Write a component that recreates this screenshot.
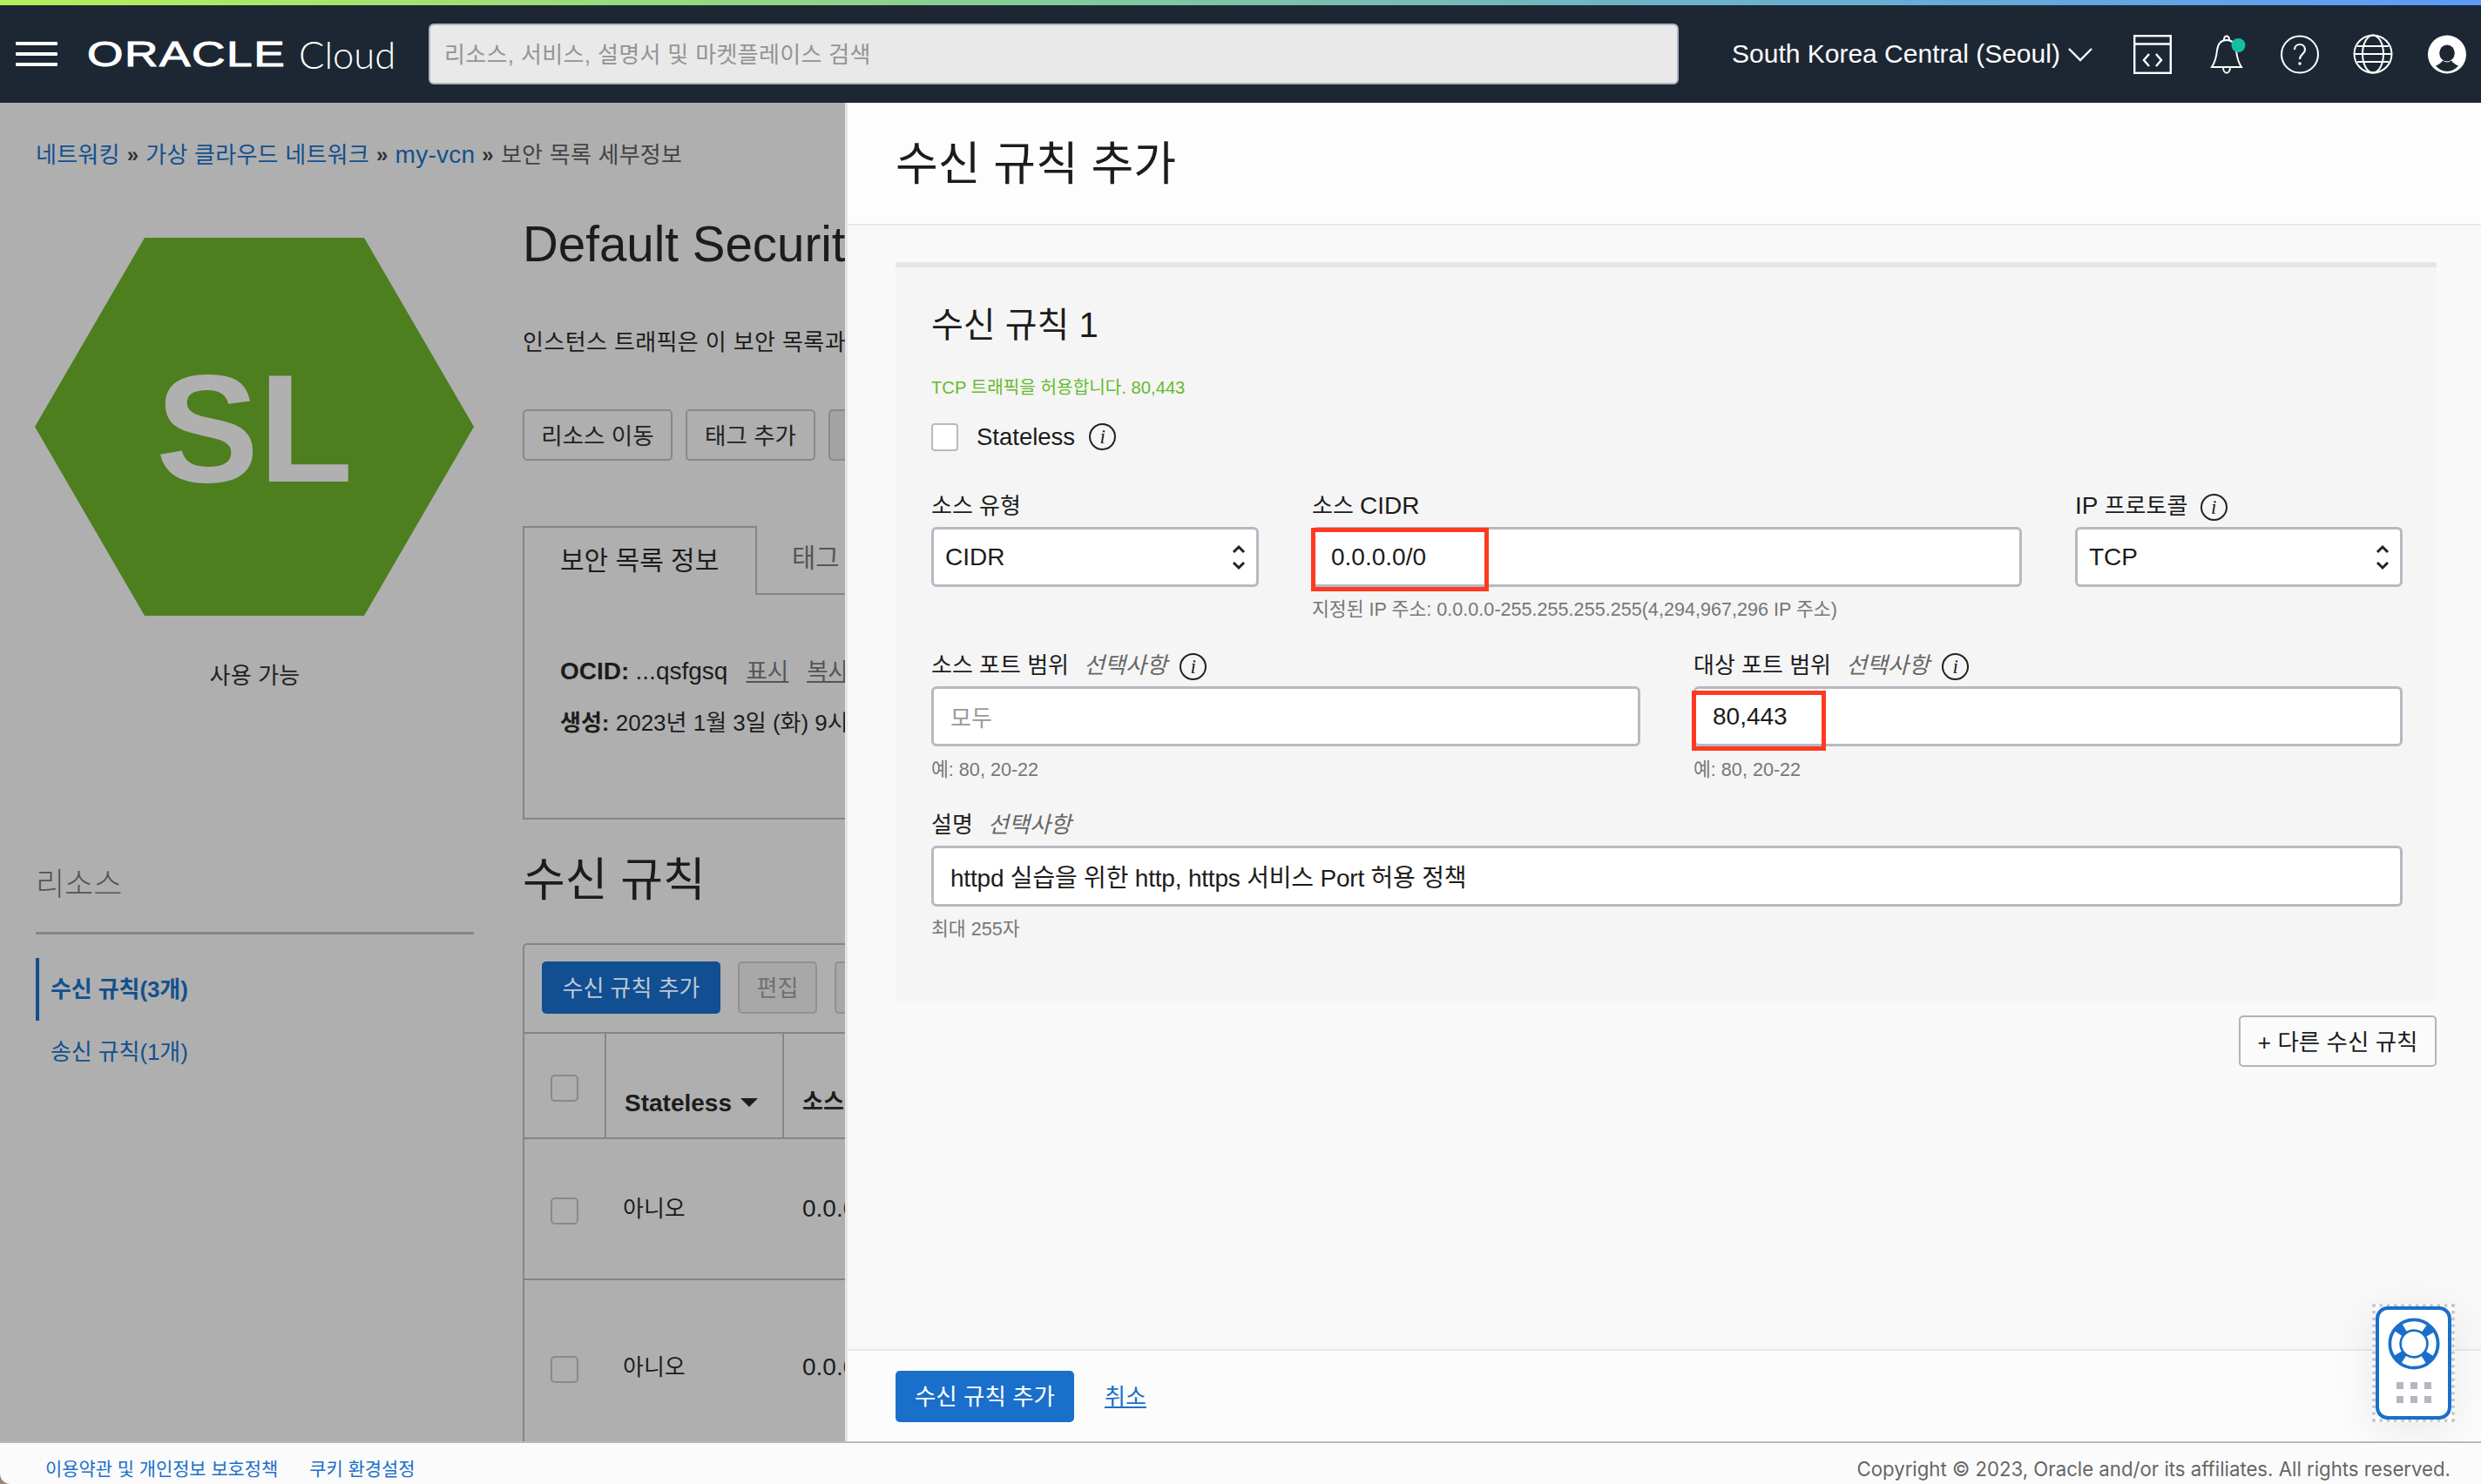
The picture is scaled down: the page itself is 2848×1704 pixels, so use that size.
<div class="app">
  <div class="rainbow"></div>
  <header class="nav">
    <div class="burger"><i></i><i></i><i></i></div>
    <div class="logo"><span class="oracle">ORACLE</span><span class="cloud">Cloud</span></div>
    <div class="search">리소스, 서비스, 설명서 및 마켓플레이스 검색</div>
    <div class="region">South Korea Central (Seoul)</div>
    <svg class="chev" width="30" height="17" viewBox="0 0 30 17"><path d="M2 2l13 13L28 2" fill="none" stroke="#fff" stroke-width="2.4"/></svg>
    <svg class="ic code" width="44" height="45" viewBox="0 0 44 45" fill="none" stroke="#fff" stroke-width="2.4"><rect x="1.2" y="1.2" width="41.6" height="42.6"/><path d="M1 10.5h42"/><path d="M18 22l-6 7 6 7M26 22l6 7-6 7"/></svg>
    <svg class="ic bell" width="44" height="48" viewBox="0 0 44 48" fill="none" stroke="#fff" stroke-width="2"><path d="M3 39c4-6 5-10 6-19 1-8 5-12 11-12s10 4 11 12c1 9 2 13 6 19z"/><path d="M17 8c0-6 6-6 6 0M16 39c0 9 8 9 8 0"/><ellipse cx="33.500" cy="14" rx="8" ry="8" fill="#13c0a3" stroke="none"/></svg>
    <svg class="ic help" width="44" height="45" viewBox="0 0 44 45" fill="none" stroke="#fff" stroke-width="2"><circle cx="22" cy="22.500" r="21"/><path d="M16 17c0-8 12-8 12 0 0 5-6 5-6 11" stroke-width="2.200"/><circle cx="22" cy="33" r="1.800" fill="#fff" stroke="none"/></svg>
    <svg class="ic globe" width="46" height="46" viewBox="0 0 46 46" fill="none" stroke="#fff" stroke-width="2"><circle cx="23" cy="23" r="21.500"/><ellipse cx="23" cy="23" rx="12" ry="21.500"/><path d="M1.500 23h43M5 14h36M5 32h36"/></svg>
    <svg class="ic user" width="44" height="45" viewBox="0 0 44 45"><circle cx="22" cy="22.500" r="22" fill="#fff"/><ellipse cx="22" cy="21" rx="8.800" ry="9.500" fill="#1d2733"/><path d="M9 35.500Q15 33 17 29.500Q22 33.500 27 29.500Q29 33 35 35.500Q30 41.500 22 42Q14 41.500 9 35.500z" fill="#1d2733"/></svg>
  </header>

  <main class="main">
    <nav class="crumbs">
      <a>네트워킹</a><b>»</b><a>가상 클라우드 네트워크</a><b>»</b><a class="la">my-vcn</a><b>»</b><span>보안 목록 세부정보</span>
    </nav>
    <div class="cols">
      <aside class="side">
        <div class="hex"><span>SL</span></div>
        <div class="status">사용 가능</div>
        <div class="res">리소스</div>
        <div class="sidelinks">
          <a class="on">수신 규칙(3개)</a>
          <a>송신 규칙(1개)</a>
        </div>
      </aside>
      <section class="content">
        <h1>Default Security</h1>
        <p class="lead">인스턴스 트래픽은 이 보안 목록과</p>
        <div class="btns"><button class="b1">리소스 이동</button><button class="b2">태그 추가</button><button class="third">삭제</button></div>
        <div class="tabbox">
          <div class="tabs"><div class="tab on">보안 목록 정보</div><div class="tab">태그</div></div>
          <div class="info">
            <div class="l1"><b class="la">OCID:</b> <span class="la">...qsfgsq</span><u>표시</u><u>복사</u></div>
            <div class="l2"><b>생성:</b> 2023년 1월 3일 (화) 9시</div>
          </div>
        </div>
        <h2>수신 규칙</h2>
        <div class="tablebox">
          <div class="tools"><button class="pri">수신 규칙 추가</button><button class="dis">편집</button><button class="dis">제거</button></div>
          <div class="row head">
            <div class="c0"><div class="cb"></div></div>
            <div class="c1"><b class="la">Stateless</b><i class="caret"></i></div>
            <div class="c2"><b>소스</b></div>
          </div>
          <div class="row r-a">
            <div class="c0"><div class="cb"></div></div>
            <div class="c1">아니오</div>
            <div class="c2 la">0.0.0.0/0</div>
          </div>
          <div class="row r-b">
            <div class="c0"><div class="cb"></div></div>
            <div class="c1">아니오</div>
            <div class="c2 la">0.0.0.0/0</div>
          </div>
        </div>
      </section>
    </div>

    <div class="panel">
      <div class="phead">수신 규칙 추가</div>
      <div class="pbody">
        <div class="rule">
          <div class="rtitle">수신 규칙 1</div>
          <div class="allow">TCP 트래픽을 허용합니다. 80,443</div>
          <div class="stateless"><div class="cb2"></div><span class="la">Stateless</span><span class="inf">i</span></div>

          <div class="r1">
            <div class="f">
              <label>소스 유형</label>
              <div class="box sel"><span class="la">CIDR</span>
                <svg width="18" height="32" viewBox="0 0 18 32" fill="none" stroke="#222" stroke-width="3"><path d="M3 10l6-6 6 6M3 22l6 6 6-6"/></svg>
              </div>
            </div>
            <div class="f">
              <label>소스 <span class="la">CIDR</span></label>
              <div class="box"><span class="la val">0.0.0.0/0</span><div class="mark m1"></div></div>
              <div class="hint">지정된 IP 주소: 0.0.0.0-255.255.255.255(4,294,967,296 IP 주소)</div>
            </div>
            <div class="f">
              <label><span class="la">IP</span> 프로토콜 <span class="inf">i</span></label>
              <div class="box sel"><span class="la">TCP</span>
                <svg width="18" height="32" viewBox="0 0 18 32" fill="none" stroke="#222" stroke-width="3"><path d="M3 10l6-6 6 6M3 22l6 6 6-6"/></svg>
              </div>
            </div>
          </div>

          <div class="r2">
            <div class="f">
              <label>소스 포트 범위 <em>선택사항</em> <span class="inf">i</span></label>
              <div class="box"><span class="ph">모두</span></div>
              <div class="hint h2">예: 80, 20-22</div>
            </div>
            <div class="f">
              <label>대상 포트 범위 <em>선택사항</em> <span class="inf">i</span></label>
              <div class="box"><span class="la val">80,443</span><div class="mark m2"></div></div>
              <div class="hint h2">예: 80, 20-22</div>
            </div>
          </div>

          <div class="f r3">
            <label>설명 <em>선택사항</em></label>
            <div class="box tall"><span class="val">httpd 실습을 위한 http, https 서비스 Port 허용 정책</span></div>
            <div class="hint">최대 255자</div>
          </div>
        </div>
        <div class="more"><button>+ 다른 수신 규칙</button></div>
      </div>
      <div class="pfoot"><button class="pri">수신 규칙 추가</button><a>취소</a></div>
    </div>

    <div class="widget">
      <div class="wcard">
        <svg width="60" height="60" viewBox="0 0 60 60">
          <circle cx="30" cy="30" r="21.750" fill="none" stroke="#1a6fcb" stroke-width="15.500"/>
          <circle cx="30" cy="30" r="21.300" fill="none" stroke="#fff" stroke-width="9" stroke-dasharray="24 9.460" stroke-dashoffset="12"/>
        </svg>
        <div class="dots"><i></i><i></i><i></i><i></i><i></i><i></i></div>
      </div>
    </div>
  </main>

  <footer class="foot">
    <a>이용약관 및 개인정보 보호정책</a><a>쿠키 환경설정</a>
    <span>Copyright © 2023, Oracle and/or its affiliates. All rights reserved.</span>
  </footer>
</div>

<style>
  :global(body) { margin: 0; }
  .app {
    width: 2848px; height: 1704px; display: flex; flex-direction: column; overflow: hidden; background: #9a8672;
    font-family: "Liberation Sans", "Noto Sans CJK KR", sans-serif; font-size: 26px; color: #1c1c1c;
  }
  .la { font-size: 28px; }
  button { font-family: inherit; }
  .rainbow { height: 6px; flex: none; background: linear-gradient(90deg, #b6f05a 0%, #8cd28c 35%, #6fb4c4 65%, #5a9cf8 100%); }
  .nav { height: 112px; flex: none; background: #1d2733; display: flex; align-items: center; color: #fff; }
  .burger { width: 48px; height: 28px; margin-left: 18px; display: flex; flex-direction: column; justify-content: space-between; }
  .burger i { height: 4px; background: #fff; border-radius: 1px; }
  .logo { margin-left: 34px; width: 360px; display: flex; align-items: center; height: 50px; }
  .oracle { display: inline-block; width: 243px; font-size: 40px; letter-spacing: 1.2px; transform: scaleX(1.33); transform-origin: left center; line-height: 50px; -webkit-text-stroke: 1px #fff; }
  .cloud { font-family: Lato, sans-serif; font-weight: 300; font-size: 43.500px; line-height: 50px; }
  .search {
    box-sizing: border-box; width: 1435px; height: 70px; margin-left: 32px; border: 2px solid #aeb4bf; border-radius: 6px; background: #e9e9e9;
    color: #949494; padding-left: 16px; line-height: 68px; letter-spacing: 0.35px;
  }
  .region { margin-left: 61px; width: 384.500px; font-size: 30px; white-space: nowrap; }
  .chev { margin-right: 46px; }
  .ic { flex: none; }
  .bell { margin-right: 38px; }
  .code { margin-right: 43px; }
  .help { margin-right: 39px; }
  .globe { margin-right: 40px; }

  .main { flex: 1; position: relative; overflow: hidden; background: #afafaf; padding: 40px 0 0 41px; min-height: 0; }
  .crumbs { height: 40px; line-height: 40px; display: flex; align-items: center; white-space: nowrap; color: #444; letter-spacing: 0.25px; }
  .crumbs a { color: #12508f; }
  .crumbs b { font-weight: 700; margin: 0 8px; color: #333; font-size: 24px; }
  .cols { display: flex; margin-top: 42px; }
  .side { width: 503px; flex: none; display: flex; flex-direction: column; }
  .hex {
    width: 504px; height: 434px; margin: 33px 0 0 -1px; box-sizing: border-box; padding-top: 4px; background: #4d7f1e;
    clip-path: polygon(0 50%, 25% 0, 75% 0, 100% 50%, 75% 100%, 25% 100%);
    display: flex; align-items: center; justify-content: center; color: #b0b0b0; font-weight: 700; font-size: 177px;
  }
  .status { margin-top: 49px; line-height: 40px; text-align: center; color: #222; letter-spacing: 0.2px; }
  .res { margin-top: 195px; line-height: 50px; font-size: 36px; color: #555; border-bottom: 3px solid #858585; height: 79px; font-weight: 300; }
  .sidelinks { margin-top: 27px; display: flex; flex-direction: column; }
  .sidelinks a { height: 72px; line-height: 72px; padding-left: 17px; color: #12508f; letter-spacing: -0.1px; }
  .sidelinks a.on { border-left: 4px solid #12508f; padding-left: 13px; font-weight: 700; }
  .content { margin-left: 56px; width: 373px; flex: none; white-space: nowrap; overflow: hidden; }
  h1 { margin: 0; font-weight: 400; font-size: 56.500px; line-height: 82px; height: 80px; }
  .lead { margin: 53px 0 0; line-height: 40px; letter-spacing: 0.4px; }
  .btns { margin-top: 57px; display: flex; gap: 15px; }
  .btns button { height: 59px; padding: 0 0 3px; border: 2px solid #858a90; border-radius: 5px; background: #afafaf; color: #222; font-size: 26.500px; flex: none; }
  .b1 { width: 172px; }
  .b2 { width: 149px; }
  .btns button.third { background: #a3a3a3; width: 120px; }
  .tabbox { margin-top: 75px; height: 337px; box-sizing: border-box; border-left: 2px solid #858585; border-bottom: 2px solid #858585; }
  .tabs { display: flex; height: 79px; }
  .tab { line-height: 74px; padding-left: 40px; color: #555; font-size: 29.500px; border-bottom: 2px solid #858585; box-sizing: border-box; flex: 1; }
  .tab.on { flex: none; width: 267px; padding-left: 41px; color: #1c1c1c; font-size: 30px; line-height: 76px; border: 0; border-top: 2px solid #858585; border-right: 2px solid #858585; }
  .info { padding: 68px 0 0 41px; }
  .info .l1 { line-height: 40px; }
  .info .l1 u { color: #555; margin-left: 21px; font-size: 26.500px; }
  .info .l2 { margin-top: 19px; line-height: 40px; }
  h2 { margin: 30px 0 0; font-weight: 400; font-size: 53px; line-height: 80px; height: 79px; }
  .tablebox { margin-top: 33px; border: 2px solid #858585; border-right: 0; border-bottom: 0; border-radius: 5px 0 0 0; }
  .tools { height: 100px; box-sizing: border-box; padding: 19px 0 0 20px; display: flex; gap: 20px; align-items: flex-start; }
  .tools button { height: 60px; border-radius: 5px; font-size: 26px; flex: none; }
  .pri { background: #114f92; color: #bdc8d6; border: 0; }
  .panel .pri { background: #1a6fcb; color: #fff; }
  .tools .pri { width: 205px; padding: 0 0 3px; }
  .tools .dis { background: #a8a8a8; color: #707070; border: 2px solid #919191; width: 91px; padding: 0 0 3px; }
  .row { display: grid; grid-template-columns: 92px 206px 1fr; height: 160px; border-top: 2px solid #858585; box-sizing: content-box; }
  .row.head { height: 119px; }
  .row > div { padding-left: 21px; line-height: 40px; box-sizing: border-box; }
  .r-a > div { padding-top: 60px; }
  .r-b { height: 320px; }
  .r-b > div { padding-top: 80px; }
  .row .c0 { padding: 0 0 0 30px; }
  .r-a .c0 { padding-top: 67px; }
  .r-b .c0 { padding-top: 87px; }
  .row .c2 { padding-left: 21px; }
  .row .c1 { padding-left: 21px; }
  .row.head .c0 { padding-top: 47px; }
  .row.head .c1 { border-left: 2px solid #858585; border-right: 2px solid #858585; padding-top: 60px; }
  .row.head .c2 { padding-top: 58px; }
  .cb { box-sizing: border-box; width: 32px; height: 31px; border: 2px solid #858a90; border-radius: 5px; }
  .caret { display: inline-block; margin-left: 10px; vertical-align: 5px; border: 10px solid transparent; border-top: 10px solid #1c1c1c; border-bottom: 0; }

  .panel { position: absolute; left: 970px; top: 0; right: 0; bottom: 0; background: #f9f9f9; display: flex; flex-direction: column; box-shadow: inset 3px 0 0 #e6e6e6; white-space: nowrap; }
  .phead { height: 141px; flex: none; box-sizing: border-box; margin-left: 3px; padding-left: 55px; font-size: 53px; line-height: 142px; background: #fdfdfd; border-bottom: 2px solid #e8e8e8; }
  .pbody { flex: 1; padding: 42px 51px 0 58px; min-height: 0; }
  .rule { height: 849px; box-sizing: border-box; background: #f5f5f5; border-top: 6px solid #e6e6e6; padding: 41px 39px 0 41px; }
  .rtitle { font-size: 40px; line-height: 50px; }
  .allow { margin-top: 32px; line-height: 30px; font-size: 20.200px; color: #66bb2c; }
  .stateless { margin-top: 26px; height: 32px; display: flex; align-items: center; }
  .stateless .la { margin-left: 21px; margin-right: 16px; font-size: 27.500px; }
  .cb2 { box-sizing: border-box; width: 31px; height: 32px; border: 2px solid #b5bac2; border-radius: 4px; background: #fff; }
  .inf {
    display: inline-flex; box-sizing: border-box; width: 31px; height: 31px; border: 2px solid #222; border-radius: 50%; align-items: center; justify-content: center;
    font-family: "Liberation Serif", serif; font-style: italic; font-size: 23px; line-height: 1; margin-left: 7px; position: relative; top: -1px; vertical-align: middle; color: #222;
  }
  .stateless .inf { margin-left: 0; }
  .f { display: flex; flex-direction: column; position: relative; min-width: 0; }
  label { height: 36px; line-height: 36px; margin-bottom: 6px; display: block; }
  label em { color: #666; margin-left: 10px; }
  .box { box-sizing: border-box; height: 69px; border: 3px solid #b5bac2; border-radius: 6px; background: #fff; display: flex; align-items: center; padding-left: 19px; position: relative; }
  .box.sel { padding: 0 11px 0 13px; justify-content: space-between; }
  .box.tall { height: 70px; font-size: 28px; letter-spacing: -0.2px; }
  .box .ph { color: #999; }
  .hint { margin-top: 11px; line-height: 30px; font-size: 21.600px; color: #777; }
  .h2 { margin-top: 12px; }
  .r1 { margin-top: 45px; display: grid; grid-template-columns: 376px 1fr 376px; column-gap: 61px; height: 152px; }
  .r2 { margin-top: 31px; display: grid; grid-template-columns: 1fr 1fr; column-gap: 61px; height: 154px; }
  .r3 { margin-top: 29px; }
  .mark { position: absolute; border: 5px solid #ff3a20; box-sizing: border-box; pointer-events: none; }
  .m1 { left: -4px; top: -2px; width: 204px; height: 73px; }
  .m2 { left: -5px; top: 2px; width: 154px; height: 69px; }
  .more { display: flex; justify-content: flex-end; margin-top: 16px; }
  .more button { width: 227px; height: 59px; background: #fbfbfb; border: 2px solid #aeb4bf; border-radius: 5px; font-size: 26.500px; color: #1c1c1c; padding: 0 0 3px; }
  .pfoot { height: 106px; flex: none; box-sizing: border-box; margin-left: 3px; background: #fcfcfc; border-top: 2px solid #e8e8e8; padding-left: 55px; display: flex; align-items: center; }
  .pfoot button { width: 205px; height: 59px; border-radius: 5px; font-size: 26.500px; padding: 0 0 3px; }
  .pfoot a { margin: 0 0 3px 35px; color: #1a6fcb; text-decoration: underline; }

  .widget { position: absolute; left: 2723px; top: 1379px; width: 95px; height: 136px; box-sizing: border-box; border: 4px dotted #c3c6cb; box-shadow: 0 10px 50px rgba(0,0,0,.08); }
  .wcard { box-sizing: border-box; position: absolute; left: 0; top: -1px; width: 87px; height: 130px; border: 4px solid #1a6fcb; border-radius: 14px; background: #fff; display: flex; flex-direction: column; align-items: center; padding-top: 9px; }
  .dots { margin-top: 14px; width: 40px; display: grid; grid-template-columns: repeat(3, 8px); gap: 8px; }
  .dots i { height: 8px; background: #b3b8c0; }

  .foot { height: 49px; flex: none; box-sizing: border-box; background: #fbfbfb; border-top: 2px solid #b5bac2; border-bottom-left-radius: 12px; display: flex; align-items: center; padding: 12px 35px 0 52px; color: #1a6fcb; font-size: 20.900px; white-space: nowrap; }
  .foot a { margin: 0 36px 3px 0; }
  .foot span { margin-left: auto; font-family: Inter, sans-serif; color: #666; font-size: 22.200px; }
</style>
